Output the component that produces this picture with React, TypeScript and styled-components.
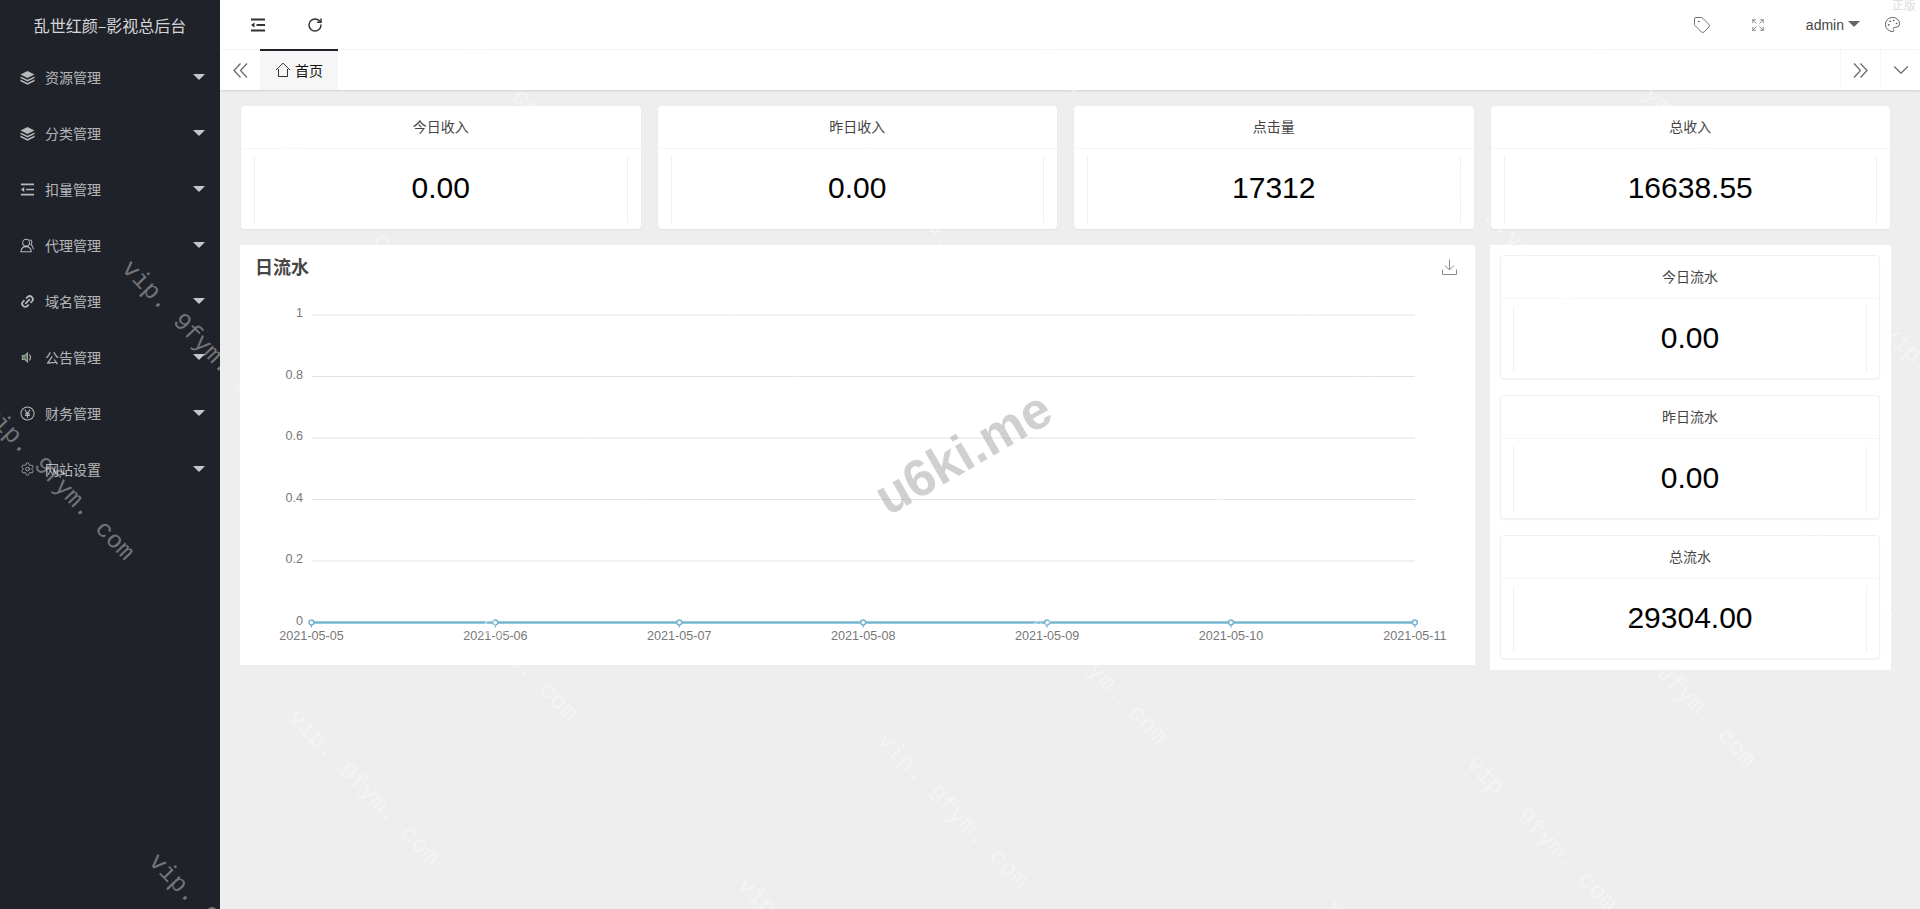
import React from 'react';
import styled, { createGlobalStyle } from 'styled-components';
import { ChevronDown, Expand, Link2, Palette, RotateCw, Settings, Tag } from 'lucide-react';

const Global = createGlobalStyle`
  html, body { margin: 0; padding: 0; height: 100%; overflow: hidden; background: #eee; }
  body { font-family: "Liberation Sans", "Noto Sans CJK SC", sans-serif; font-size: 14px; color: #333; }
  #root { height: 100%; }
  * { box-sizing: border-box; }
`;

const Shell = styled.div`
  position: relative;
  display: flex;
  width: 100%;
  height: 909px;
  overflow: hidden;
`;
const Sidebar = styled.aside`
  flex: 0 0 220px;
  background: #1f2229;
  display: flex;
  flex-direction: column;
`;
const Brand = styled.div`
  height: 50px;
  line-height: 50px;
  text-align: center;
  font-size: 16px;
  color: rgba(255, 255, 255, 0.82);
  font-family: "Noto Sans CJK SC", sans-serif;
  white-space: nowrap;
`;
const MenuItem = styled.div`
  height: 56px;
  display: flex;
  align-items: center;
  padding: 0 15px 0 20px;
  color: rgba(255, 255, 255, 0.68);
  font-family: "Noto Sans CJK SC", sans-serif;
  font-size: 14px;
  svg { flex: 0 0 15px; margin-top: -2px; }
`;
const MenuLabel = styled.span`
  margin-left: 10px;
  flex: 1;
  padding-bottom: 2px;
`;
const Caret = styled.i<{ $color?: string }>`
  width: 0;
  height: 0;
  margin-top: -2px;
  border-left: 6px solid transparent;
  border-right: 6px solid transparent;
  border-top: 6px solid ${(p) => p.$color || 'rgba(255,255,255,0.75)'};
`;
const Main = styled.main`
  flex: 1;
  min-width: 0;
  display: flex;
  flex-direction: column;
`;
const TopBar = styled.header`
  height: 50px;
  background: #fff;
  border-bottom: 1px solid #f6f6f6;
  display: flex;
  align-items: center;
  padding: 0 0 0 30px;
  color: #333;
`;
const TopTools = styled.div`
  display: flex;
  align-items: center;
  gap: 41px;
  flex: 1;
`;
const TopRight = styled.div`
  display: flex;
  align-items: center;
  color: #555;
`;
const ToolSlot = styled.span<{ $w: number }>`
  width: ${(p) => p.$w}px;
  display: flex;
  align-items: center;
  justify-content: center;
`;
const UserName = styled.span`
  font-size: 14px;
  color: #444;
  margin: 0 4px 0 12px;
`;
const UserCaret = styled(Caret)`
  margin-right: 4px;
`;
const TabBar = styled.nav`
  height: 40px;
  background: #fff;
  display: flex;
  align-items: stretch;
  box-shadow: 0 1px 2px rgba(0, 0, 0, 0.12);
  position: relative;
`;
const TabEdge = styled.div<{ $border?: boolean }>`
  width: 40px;
  display: flex;
  align-items: center;
  justify-content: center;
  color: #666;
  border-left: ${(p) => (p.$border ? '1px solid #f6f6f6' : '0')};
`;
const ActiveTab = styled.div`
  width: 78px;
  background: #f6f6f6;
  border-top: 2px solid #1f2229;
  display: flex;
  align-items: center;
  padding: 0 0 2px 15px;
  gap: 4px;
  font-family: "Noto Sans CJK SC", sans-serif;
  font-size: 14px;
  color: #111;
  margin-top: -1px;
`;
const TabSpacer = styled.div`
  flex: 1;
`;
const Content = styled.div`
  flex: 1;
  padding: 16px 29px 0 20px;
  background: #eee;
`;
const StatRow = styled.div`
  display: grid;
  grid-template-columns: repeat(4, 1fr);
  gap: 17px;
  padding: 0 1px;
`;
const Card = styled.section<{ $inset?: boolean }>`
  height: ${(p) => (p.$inset ? '124px' : '123px')};
  background: #fff;
  border-radius: 4px;
  border: ${(p) => (p.$inset ? '1px solid #f0f0f0' : '0')};
  box-shadow: 0 1px 2px rgba(0, 0, 0, 0.05);
  display: flex;
  flex-direction: column;
`;
const CardHead = styled.div`
  height: 43px;
  flex: 0 0 43px;
  border-bottom: 1px solid #f6f6f6;
  display: flex;
  align-items: center;
  justify-content: center;
  padding-bottom: 2px;
  font-family: "Noto Sans CJK SC", sans-serif;
  font-size: 14px;
  color: #444;
`;
const CardBody = styled.div<{ $inset?: boolean }>`
  flex: 1;
  padding: 7px ${(p) => (p.$inset ? '12px' : '13px')} 6px;
  display: flex;
`;
const Figure = styled.div`
  flex: 1;
  border-left: 1px solid #eef0f3;
  border-right: 1px solid #eef0f3;
  display: flex;
  align-items: center;
  justify-content: center;
  font-size: 30px;
  color: #000;
  padding-bottom: 3px;
`;
const ChartRow = styled.div`
  display: grid;
  grid-template-columns: 1235px 401px;
  gap: 15px;
  margin-top: 16px;
  align-items: start;
`;
const ChartPanel = styled.section`
  height: 420px;
  background: #fff;
`;
const ChartHead = styled.div`
  height: 44px;
  display: flex;
  align-items: center;
  justify-content: space-between;
  padding: 0 18px 0 15px;
  color: #8a8a8a;
`;
const ChartTitle = styled.h3`
  margin: 0 0 2px;
  font-family: "Noto Sans CJK SC", sans-serif;
  font-size: 18px;
  font-weight: 700;
  color: #464646;
`;
const ChartSvg = styled.svg`
  display: block;
  font-family: "Liberation Sans", sans-serif;
  font-size: 12.6px;
  fill: #777;
`;
const SidePanel = styled.section`
  background: #fff;
  padding: 10px 11px 11px 10px;
  display: flex;
  flex-direction: column;
  gap: 16px;
`;
const Overlay = styled.div`
  position: absolute;
  inset: 0;
  overflow: hidden;
  pointer-events: none;
`;
const Mark = styled.span`
  position: absolute;
  font-family: "Liberation Mono", monospace;
  font-size: 24.5px;
  line-height: 1;
  white-space: pre;
  color: rgba(255, 255, 255, 0.38);
  transform-origin: 0 50%;
  transform: rotate(46deg);
`;
const Stamp = styled.span`
  position: absolute;
  left: 879px;
  top: 471px;
  font-family: "Liberation Sans", sans-serif;
  font-weight: 700;
  font-size: 52px;
  line-height: 60px;
  color: rgba(170, 170, 170, 0.55);
  transform-origin: 0 50%;
  transform: rotate(-30deg);
  white-space: nowrap;
`;
const Seal = styled.span`
  position: absolute;
  right: 4px;
  top: -4px;
  font-family: "Noto Sans CJK SC", sans-serif;
  font-size: 12px;
  color: #ddd;
`;

const Layers = () => (
  <svg width="15" height="15" viewBox="0 0 16 16" fill="currentColor">
    <path d="M8 1 15.5 4.8 8 8.6 .5 4.8z" />
    <path d="M.5 6.8 8 10.4 15.5 6.8V8.6L8 12.2 .5 8.6z" />
    <path d="M.5 10.2 8 13.8 15.5 10.2V12L8 15.6 .5 12z" />
  </svg>
);
const Outdent = ({ s = 15 }: { s?: number }) => (
  <svg width={s} height={s} viewBox="0 0 16 16" fill="none" stroke="currentColor" strokeWidth="1.8">
    <path d="M1 2.5H15M6.5 8H15M1 13.5H15" />
    <path d="M4.5 5.4V10.6L1 8z" fill="currentColor" stroke="none" />
  </svg>
);
const UserPair = () => (
  <svg width="15" height="15" viewBox="0 0 16 16" fill="none" stroke="currentColor" strokeWidth="1.1">
    <circle cx="6.5" cy="5" r="3.6" />
    <path d="M1 14.6c.3-3.2 2-5.4 5.5-5.4s5.2 2.2 5.5 5.4z" />
    <path d="M10.5 1.8c2.3.4 3 3.6 1 5.2 1.6.8 2.6 2.6 2.8 5" />
  </svg>
);
const Speaker = () => (
  <svg width="15" height="15" viewBox="0 0 16 16" fill="none" stroke="#93aa9b" strokeWidth="1.2">
    <path d="M2.5 6H5L8 3.2V12.8L5 10H2.5z" fill="#5f7467" />
    <path d="M10 5C11.6 6.4 11.6 9.6 10 11" stroke="#b9c6bd" />
  </svg>
);
const Yen = () => (
  <svg width="15" height="15" viewBox="0 0 16 16" fill="none" stroke="currentColor" strokeWidth="1.1">
    <circle cx="8" cy="8" r="7" />
    <path d="M5.2 4 8 8l2.8-4M8 8v4.4M5.4 8.4h5.2M5.4 10.2h5.2" />
  </svg>
);
const Home = () => (
  <svg width="16" height="16" viewBox="0 0 16 16" fill="none" stroke="#333" strokeWidth="1">
    <path d="M1 8 8 1.2 15 8M3.5 7V14.5H12.5V7" />
  </svg>
);
const Download = () => (
  <svg width="15" height="16" viewBox="0 0 15 16" fill="none" stroke="currentColor" strokeWidth="1">
    <path d="M7.5 0.5V10.5M3 6.5 7.5 11 12 6.5M0.5 10.5V15.5H14.5V10.5" />
  </svg>
);
const DoubleChevron = ({ flip }: { flip?: boolean }) => (
  <svg width="15" height="15" viewBox="0 0 15 15" fill="none" stroke="currentColor" strokeWidth="1.2" style={flip ? { transform: 'scaleX(-1)' } : undefined}>
    <path d="M7.5 .5 1 7.5 7.5 14.5M14 .5 7.5 7.5 14 14.5" />
  </svg>
);

const menu: [string, React.ReactNode][] = [
  ['资源管理', <Layers />],
  ['分类管理', <Layers />],
  ['扣量管理', <Outdent />],
  ['代理管理', <UserPair />],
  ['域名管理', <Link2 size={17} strokeWidth={2.8} style={{ transform: 'rotate(-45deg)' }} />],
  ['公告管理', <Speaker />],
  ['财务管理', <Yen />],
  ['网站设置', <Settings size={16} strokeWidth={1.2} />],
];

const top = [['今日收入', '0.00'], ['昨日收入', '0.00'], ['点击量', '17312'], ['总收入', '16638.55']];
const side = [['今日流水', '0.00'], ['昨日流水', '0.00'], ['总流水', '29304.00']];
const dates = ['05', '06', '07', '08', '09', '10', '11'].map((d) => `2021-05-${d}`);
const levels = ['1', '0.8', '0.6', '0.4', '0.2', '0'];

const X0 = 71.5;
const XS = 183.9;
const Y0 = 26;
const YS = 61.5;
const BASE = Y0 + YS * 5;

const Stat = ({ label, value, inset }: { label: string; value: string; inset?: boolean }) => (
  <Card $inset={inset}>
    <CardHead>{label}</CardHead>
    <CardBody $inset={inset}>
      <Figure>{value}</Figure>
    </CardBody>
  </Card>
);

const marks: [number, number][] = [];
for (let i = -2; i < 6; i++) {
  for (let j = -2; j < 4; j++) {
    const nudge = j === -1 ? 6 : 0;
    const x = 291 + i * 139 + j * 589 + nudge;
    const y = 714 - i * 144 + j * 23 + nudge;
    if (x < 1920 && y < 909 && x + 150 > 0 && y + 150 > 0) marks.push([x, y]);
  }
}

export default function App() {
  return (
    <Shell>
      <Global />
      <Sidebar>
        <Brand>乱世红颜–影视总后台</Brand>
        {menu.map(([label, icon]) => (
          <MenuItem key={label}>
            {icon}
            <MenuLabel>{label}</MenuLabel>
            <Caret />
          </MenuItem>
        ))}
      </Sidebar>
      <Main>
        <TopBar>
          <TopTools>
            <Outdent s={16} />
            <RotateCw size={16} strokeWidth={2.2} />
          </TopTools>
          <TopRight>
            <ToolSlot $w={40}><Tag size={18} strokeWidth={1.1} /></ToolSlot>
            <ToolSlot $w={72}><Expand size={14} strokeWidth={1.1} /></ToolSlot>
            <UserName>admin</UserName>
            <UserCaret $color="#666" />
            <ToolSlot $w={56}><Palette size={17} strokeWidth={1.3} /></ToolSlot>
          </TopRight>
        </TopBar>
        <TabBar>
          <TabEdge><DoubleChevron /></TabEdge>
          <ActiveTab><Home />首页</ActiveTab>
          <TabSpacer />
          <TabEdge $border><DoubleChevron flip /></TabEdge>
          <TabEdge $border><ChevronDown size={26} strokeWidth={1} /></TabEdge>
        </TabBar>
        <Content>
          <StatRow>
            {top.map(([l, v]) => <Stat key={l} label={l} value={v} />)}
          </StatRow>
          <ChartRow>
            <ChartPanel>
              <ChartHead>
                <ChartTitle>日流水</ChartTitle>
                <Download />
              </ChartHead>
              <ChartSvg width="1235" height="376" viewBox="0 0 1235 376">
                {levels.map((l, i) => (
                  <g key={l}>
                    {i < 5 && <line x1={X0} x2={X0 + XS * 6} y1={Y0 + YS * i} y2={Y0 + YS * i} stroke="#e2e2e2" />}
                    <text x="63" y={Y0 + YS * i + 2} textAnchor="end">{l}</text>
                  </g>
                ))}
                {dates.map((d, i) => (
                  <g key={d}>
                    <line x1={X0 + XS * i} x2={X0 + XS * i} y1={BASE} y2={BASE + 5} stroke="#6fa3b8" />
                    <text x={X0 + XS * i} y={BASE + 17} textAnchor="middle">{d}</text>
                  </g>
                ))}
                <line x1={X0} x2={X0 + XS * 6} y1={BASE} y2={BASE} stroke="#76b5d0" strokeWidth="2.4" />
                {dates.map((d, i) => (
                  <circle key={d} cx={X0 + XS * i} cy={BASE} r="2.4" fill="#fff" stroke="#76b5d0" strokeWidth="1.5" />
                ))}
              </ChartSvg>
            </ChartPanel>
            <SidePanel>
              {side.map(([l, v]) => <Stat key={l} label={l} value={v} inset />)}
            </SidePanel>
          </ChartRow>
        </Content>
      </Main>
      <Overlay>
        {marks.map(([x, y]) => (
          <Mark key={`${x}-${y}`} style={{ left: x, top: y - 12 }}>vip. 9fym. com</Mark>
        ))}
        <Stamp>u6ki.me</Stamp>
        <Seal>正版</Seal>
      </Overlay>
    </Shell>
  );
}
